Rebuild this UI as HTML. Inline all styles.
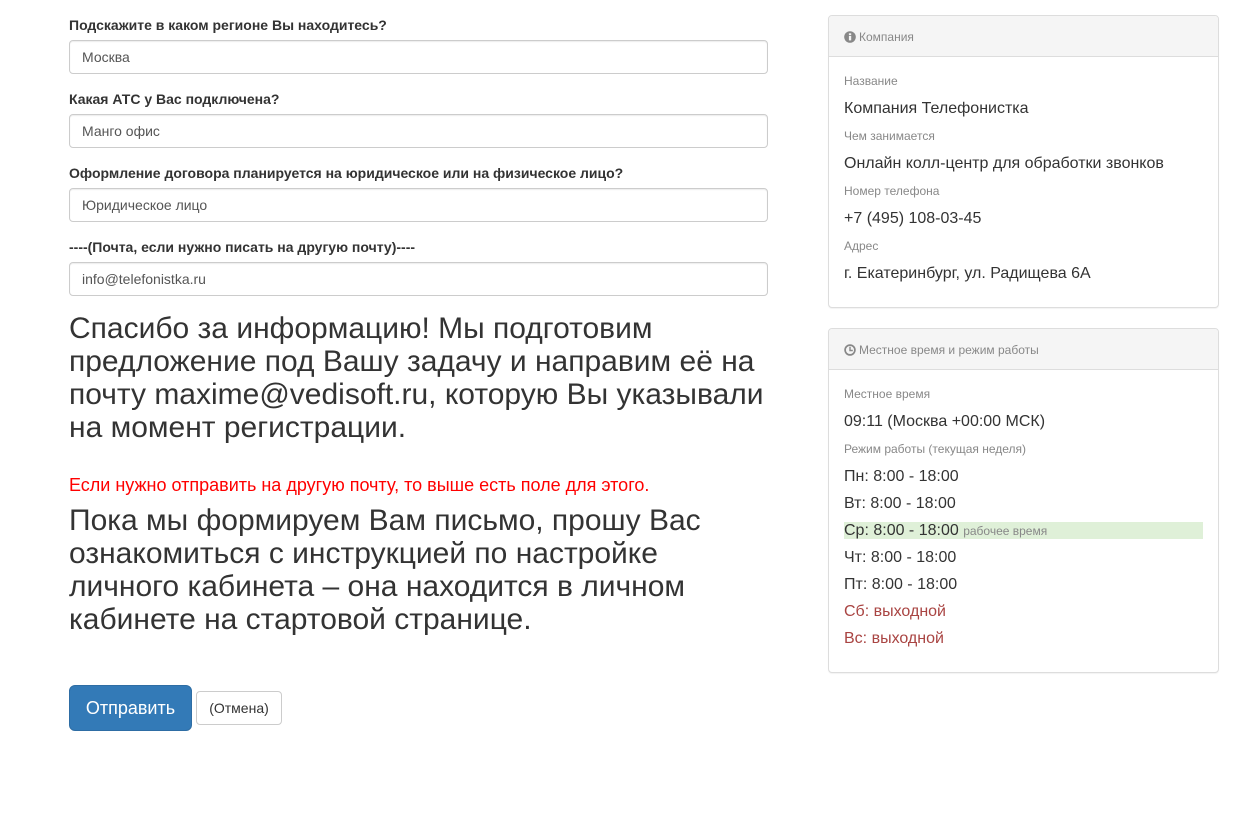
<!DOCTYPE html>
<html lang="ru">
<head>
<meta charset="utf-8">
<title>Форма</title>
<style>
*{box-sizing:border-box}
html,body{margin:0;padding:0;background:#fff}
body{width:1252px;height:822px;overflow:hidden;position:relative;font-family:"Liberation Sans",Arial,sans-serif;font-size:14px;line-height:20px;color:#333}
.a{position:absolute;white-space:nowrap}
.lb{left:69px;font-weight:700;height:20px}
.in{left:69px;width:699px;height:34px;border:1px solid #ccc;border-radius:4px;padding:6px 12px;color:#555;box-shadow:inset 0 1px 1px rgba(0,0,0,.075);background:#fff}
.h{left:69px;font-size:30px;line-height:33px;color:#333}
.panel{position:absolute;left:828px;width:391px;border:1px solid #ddd;border-radius:4px;background:#fff;box-shadow:0 1px 1px rgba(0,0,0,.05)}
.ph{position:absolute;left:0;top:0;right:0;height:41px;background:#f5f5f5;border-bottom:1px solid #ddd;border-radius:3px 3px 0 0;font-size:12px;line-height:41px;color:#888;padding-left:15px;white-space:nowrap}
.ph span{position:relative;top:1px}
.ph svg{position:relative;top:1px;vertical-align:-1.5px;margin-right:3px}
.s{position:absolute;left:15px;font-size:12px;line-height:17px;color:#888;white-space:nowrap}
.v{position:absolute;left:15px;font-size:16px;line-height:22px;color:#333;white-space:nowrap}
.r{color:#a94442}
.btn{position:absolute;text-align:center;white-space:nowrap}
</style>
</head>
<body>
<div class="a lb" style="top:15px">Подскажите в каком регионе Вы находитесь?</div>
<div class="a in" style="top:40px">Москва</div>
<div class="a lb" style="top:89px">Какая АТС у Вас подключена?</div>
<div class="a in" style="top:114px">Манго офис</div>
<div class="a lb" style="top:163px">Оформление договора планируется на юридическое или на физическое лицо?</div>
<div class="a in" style="top:188px">Юридическое лицо</div>
<div class="a lb" style="top:237px">----(Почта, если нужно писать на другую почту)----</div>
<div class="a in" style="top:262px">info@telefonistka.ru</div>

<div class="a h" style="top:312px">Спасибо за информацию! Мы подготовим<br>предложение под Вашу задачу и направим её на<br>почту maxime@vedisoft.ru, которую Вы указывали<br>на момент регистрации.</div>
<div class="a" style="left:69px;top:474px;font-size:18px;line-height:22px;color:#f00">Если нужно отправить на другую почту, то выше есть поле для этого.</div>
<div class="a h" style="top:504px">Пока мы формируем Вам письмо, прошу Вас<br>ознакомиться с инструкцией по настройке<br>личного кабинета – она находится в личном<br>кабинете на стартовой странице.</div>

<div class="btn" style="left:69px;top:685px;width:123px;height:46px;background:#337ab7;border:1px solid #2e6da4;border-radius:6px;color:#fff;font-size:18px;line-height:44px">Отправить</div>
<div class="btn" style="left:196px;top:691px;width:86px;height:34px;background:#fff;border:1px solid #ccc;border-radius:4px;color:#333;font-size:14px;line-height:32px">(Отмена)</div>

<div class="panel" style="top:15px;height:293px">
  <div class="ph"><svg width="12" height="12" viewBox="0 0 12 12"><circle cx="6" cy="6" r="5.8" fill="#888"/><rect x="4.9" y="5" width="2.3" height="4.4" fill="#f5f5f5"/><rect x="4.9" y="2.3" width="2.3" height="1.9" fill="#f5f5f5"/></svg><span>Компания</span></div>
  <div class="s" style="top:57px">Название</div>
  <div class="v" style="top:82px">Компания Телефонистка</div>
  <div class="s" style="top:112px">Чем занимается</div>
  <div class="v" style="top:137px">Онлайн колл-центр для обработки звонков</div>
  <div class="s" style="top:167px">Номер телефона</div>
  <div class="v" style="top:192px">+7 (495) 108-03-45</div>
  <div class="s" style="top:222px">Адрес</div>
  <div class="v" style="top:247px">г. Екатеринбург, ул. Радищева 6А</div>
</div>

<div class="panel" style="top:328px;height:345px">
  <div class="ph"><svg width="12" height="12" viewBox="0 0 12 12"><circle cx="6" cy="6" r="4.9" fill="none" stroke="#888" stroke-width="1.7"/><path d="M6 2.8v3.7h2.8" fill="none" stroke="#888" stroke-width="1.4"/></svg><span>Местное время и режим работы</span></div>
  <div class="s" style="top:57px">Местное время</div>
  <div class="v" style="top:82px">09:11 (Москва +00:00 МСК)</div>
  <div class="s" style="top:112px">Режим работы (текущая неделя)</div>
  <div class="v" style="top:137px">Пн: 8:00 - 18:00</div>
  <div class="v" style="top:164px">Вт: 8:00 - 18:00</div>
  <div style="position:absolute;left:15px;top:193px;width:359px;height:17px;background:#dff0d8"></div>
  <div class="v" style="top:191px">Ср: 8:00 - 18:00 <span style="font-size:12px;color:#888">рабочее время</span></div>
  <div class="v" style="top:218px">Чт: 8:00 - 18:00</div>
  <div class="v" style="top:245px">Пт: 8:00 - 18:00</div>
  <div class="v r" style="top:272px">Сб: выходной</div>
  <div class="v r" style="top:299px">Вс: выходной</div>
</div>
</body>
</html>
